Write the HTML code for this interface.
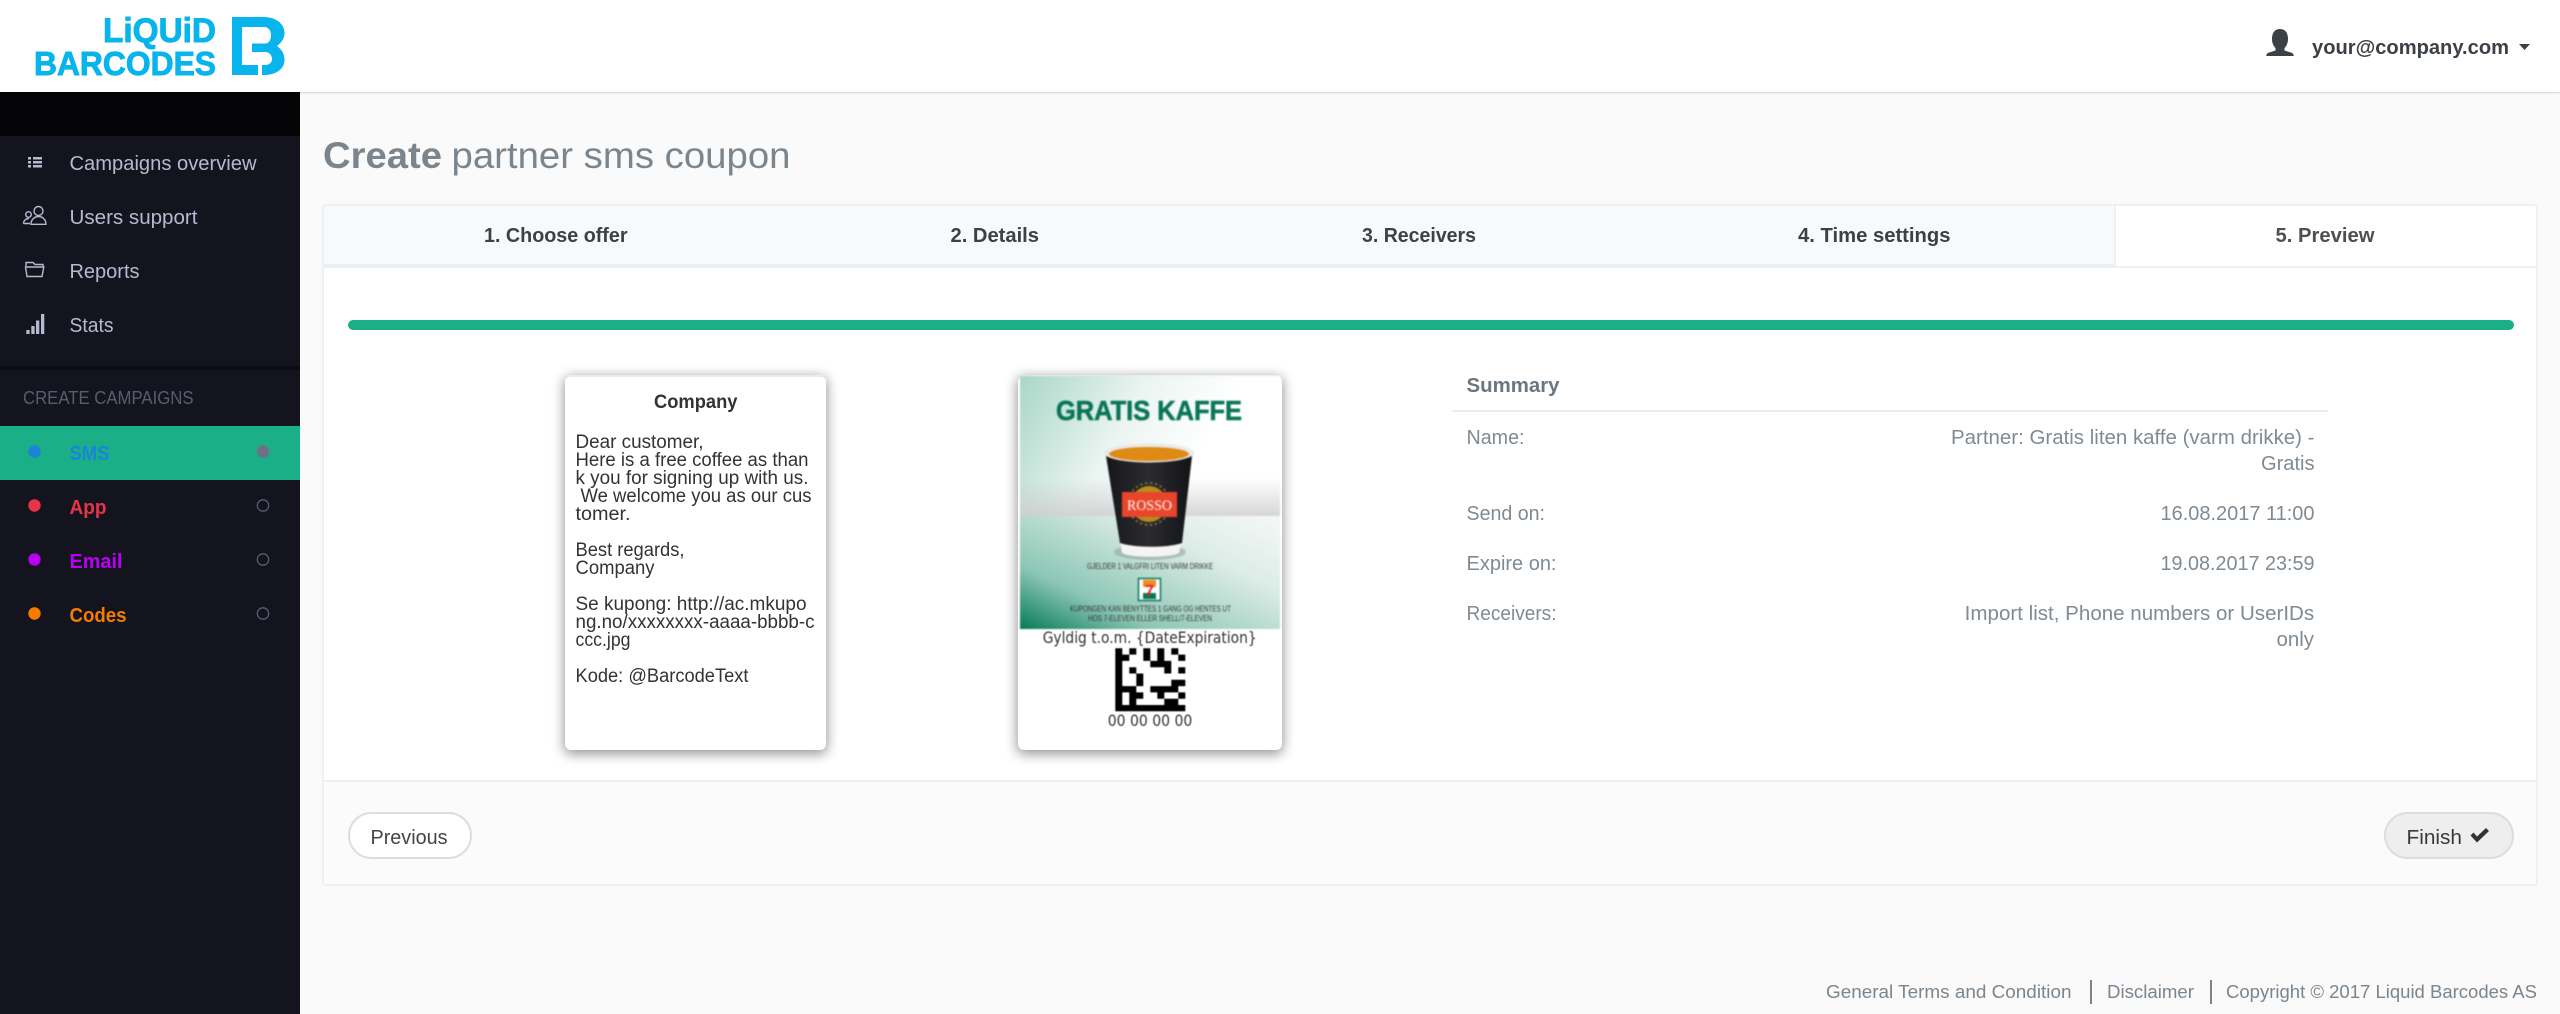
<!DOCTYPE html>
<html lang="en"><head><meta charset="utf-8"><title>Create partner sms coupon</title>
<style>
html,body{margin:0;padding:0;background:#fafafa}
#p{position:relative;width:2560px;height:1014px;overflow:hidden;background:#fafafa}
#p>div{position:absolute;box-sizing:border-box}
#hd{left:0;top:0;width:2560px;height:92px;background:#fff;box-shadow:0 1px 2px rgba(0,0,0,.16)}
#sb{left:0;top:92px;width:300px;height:922px;background:#13141d}
.card{background:#fff;border-radius:6px;border-top:2px solid #e8ecef;box-shadow:0 3px 12px 1px rgba(0,0,0,.42)}
svg{position:absolute;left:0;top:0}
text{font-family:"Liberation Sans",Arial,sans-serif}
.dj{font-family:"DejaVu Sans",sans-serif}
.b{font-weight:700}
</style></head><body><div id="p">
<div id="hd"></div>
<div id="sb"></div>
<div style="left:322px;top:204px;width:2216px;height:682px;background:#fff;border:2px solid #edf0f4;border-radius:3px"></div>
<div style="left:324px;top:206px;width:1792px;height:58px;background:#f8f9fb"></div>
<div style="left:324px;top:264px;width:1792px;height:4px;background:#ebeef2"></div>
<div style="left:2116px;top:266px;width:420px;height:2px;background:#edf0f4"></div>
<div style="left:2114px;top:206px;width:2px;height:60px;background:#edf0f4"></div>
<div style="left:324px;top:782px;width:2212px;height:102px;background:#fbfbfb"></div>
<div style="left:324px;top:780px;width:2212px;height:2px;background:#edf0f4"></div>
<div style="left:348px;top:320px;width:2166px;height:10px;background:#1aaf87;border-radius:5px"></div>
<div class="card" style="left:565px;top:375px;width:261px;height:375px"></div>
<div class="card" style="left:1018px;top:375px;width:264px;height:375px"></div>
<div style="left:348px;top:812px;width:124px;height:47px;background:#fff;border:2px solid #ddd;border-radius:24px"></div>
<div style="left:2384px;top:812px;width:130px;height:47px;background:#eee;border:2px solid #ddd;border-radius:24px"></div>
<svg width="2560" height="1014" viewBox="0 0 2560 1014" xmlns="http://www.w3.org/2000/svg">
<defs>
<linearGradient id="w" x1="0" y1="0" x2="1" y2="0.3"><stop offset="0" stop-color="#a9d6c8"/><stop offset=".45" stop-color="#eaf4f1"/><stop offset=".8" stop-color="#fff"/></linearGradient>
<linearGradient id="hz" x1="0" y1="0" x2="0" y2="1"><stop offset="0" stop-color="#c8c8c8" stop-opacity="0"/><stop offset="1" stop-color="#c8c8c8" stop-opacity=".75"/></linearGradient>
<linearGradient id="f" x1="0" y1="1" x2="1" y2="0.1"><stop offset="0" stop-color="#067a58"/><stop offset=".28" stop-color="#8cc6b4"/><stop offset=".72" stop-color="#dcece7"/><stop offset="1" stop-color="#f2f6f5"/></linearGradient>
<linearGradient id="c" x1="0" y1="0" x2="1" y2="0"><stop offset="0" stop-color="#15161a"/><stop offset=".5" stop-color="#2c2c30"/><stop offset="1" stop-color="#121316"/></linearGradient>
</defs>
<!-- logo -->
<g fill="#08b4ec" stroke="#08b4ec">
<text class="b" x="103" y="42" font-size="34" stroke-width=".9" textLength="113" lengthAdjust="spacingAndGlyphs">LiQUiD</text>
<text class="b" x="34" y="75" font-size="33" stroke-width=".9" textLength="182" lengthAdjust="spacingAndGlyphs">BARCODES</text>
<path stroke="none" d="M232 17H264C276 17 284.500 24 284.500 33C284.500 39 281 43 277 46C281 49 284.500 53 284.500 60C284.500 69 276 75 264 75H262V65H265C269 65 272 63 272 59C272 55 269 52 265 52H252V43.500H265C269 43.500 271 40 271 35C271 30 268 27 264 27H242V65H258V75H232Z"/>
</g>
<!-- user -->
<path fill="#3b4147" d="M2280 29C2274 29 2272 34 2272 39C2272 43 2273.500 46 2275.500 48V50.500L2267.500 53L2266 56H2294L2292.500 53L2284.500 50.500V48C2286.500 46 2288 43 2288 39C2288 34 2286 29 2280 29Z"/>
<text class="b" x="2312" y="54" font-size="20" fill="#3b4147" textLength="197" lengthAdjust="spacingAndGlyphs">your@company.com</text>
<path fill="#3b4147" d="M2519 44H2530L2524.500 50Z"/>
<!-- sidebar -->
<rect x="0" y="92" width="300" height="44" fill="#050508"/>
<rect x="0" y="366" width="300" height="4" fill="#0c0d13"/>
<rect x="0" y="426" width="300" height="54" fill="#1aaf87"/>
<g fill="#b4bbd0" font-size="20">
<text x="69.500" y="170" textLength="187" lengthAdjust="spacingAndGlyphs">Campaigns overview</text>
<text x="69.500" y="224" textLength="128" lengthAdjust="spacingAndGlyphs">Users support</text>
<text x="69.500" y="278" textLength="70" lengthAdjust="spacingAndGlyphs">Reports</text>
<text x="69.500" y="332" textLength="44" lengthAdjust="spacingAndGlyphs">Stats</text>
<path d="M28 157h3v2.500h-3zM33 157h9v2.500h-9zM28 161h3v2.500h-3zM33 161h9v2.500h-9zM28 165h3v2.500h-3zM33 165h9v2.500h-9z"/>
<path d="M26.300 330h3.300v4h-3.300zM31.300 326h3.300v8h-3.300zM36 320.500h3.300v13.500h-3.300zM41 314h3.300v20h-3.300z"/>
</g>
<g fill="none" stroke="#b4bbd0" stroke-width="1.400">
<circle cx="38.500" cy="211" r="4.500"/>
<path d="M31 224.300C31 219.500 34.500 216.500 38.500 216.500C42.500 216.500 46 219.500 46 224.300Z"/>
<circle cx="28.500" cy="214.500" r="2.800"/>
<path d="M23.500 223.500C23.500 220.500 26 218.500 29 218.500M23.500 223.500H30"/>
<path d="M26 266V262.500H33L35 264.500H43V267M25.500 267H43.800L42 276.500H27Z"/>
</g>
<text x="23" y="404" font-size="18" fill="#5a5c6e" textLength="170.500" lengthAdjust="spacingAndGlyphs">CREATE CAMPAIGNS</text>
<g class="b" font-size="20" font-weight="700">
<text x="69.500" y="460" fill="#1b84d8" textLength="40" lengthAdjust="spacingAndGlyphs">SMS</text>
<text x="69.500" y="514" fill="#e8344a" textLength="37" lengthAdjust="spacingAndGlyphs">App</text>
<text x="69.500" y="568" fill="#b800f5" textLength="53" lengthAdjust="spacingAndGlyphs">Email</text>
<text x="69.500" y="622" fill="#f57c00" textLength="57" lengthAdjust="spacingAndGlyphs">Codes</text>
</g>
<circle cx="34.500" cy="451.500" r="6.200" fill="#1b84d8"/>
<circle cx="34.500" cy="505.500" r="6.200" fill="#e8344a"/>
<circle cx="34.500" cy="559.500" r="6.200" fill="#b800f5"/>
<circle cx="34.500" cy="613.500" r="6.200" fill="#f57c00"/>
<circle cx="263" cy="451.500" r="6.200" fill="#6f7086"/>
<g fill="none" stroke="#5a5c6e" stroke-width="1.300"><circle cx="263" cy="505.500" r="5.700"/><circle cx="263" cy="559.500" r="5.700"/><circle cx="263" cy="613.500" r="5.700"/></g>
<!-- title -->
<text class="b" x="323" y="168" font-size="37" fill="#7a858e" textLength="119" lengthAdjust="spacingAndGlyphs">Create</text>
<text x="451.500" y="168" font-size="37" fill="#7a858e" textLength="339" lengthAdjust="spacingAndGlyphs">partner sms coupon</text>
<!-- tabs -->
<g class="b" font-size="20" font-weight="700" fill="#3b4147">
<text x="484" y="242" textLength="143.500" lengthAdjust="spacingAndGlyphs">1. Choose offer</text>
<text x="950.500" y="242" textLength="88.500" lengthAdjust="spacingAndGlyphs">2. Details</text>
<text x="1362" y="242" textLength="114" lengthAdjust="spacingAndGlyphs">3. Receivers</text>
<text x="1798" y="242" textLength="152.500" lengthAdjust="spacingAndGlyphs">4. Time settings</text>
<text x="2275.500" y="242" fill="#4f4f4f" textLength="99" lengthAdjust="spacingAndGlyphs">5. Preview</text>
</g>
<!-- sms card -->
<g fill="#333" font-size="19">
<text class="b" font-weight="700" x="654" y="408" textLength="83.500" lengthAdjust="spacingAndGlyphs">Company</text>
<text x="575.500" y="448" textLength="128" lengthAdjust="spacingAndGlyphs">Dear customer,</text>
<text x="575.500" y="466" textLength="233" lengthAdjust="spacingAndGlyphs">Here is a free coffee as than</text>
<text x="575.500" y="484" textLength="233" lengthAdjust="spacingAndGlyphs">k you for signing up with us.</text>
<text x="580.500" y="502" textLength="231" lengthAdjust="spacingAndGlyphs">We welcome you as our cus</text>
<text x="575.500" y="520" textLength="55" lengthAdjust="spacingAndGlyphs">tomer.</text>
<text x="575.500" y="556" textLength="109" lengthAdjust="spacingAndGlyphs">Best regards,</text>
<text x="575.500" y="574" textLength="79" lengthAdjust="spacingAndGlyphs">Company</text>
<text x="575.500" y="610" textLength="231" lengthAdjust="spacingAndGlyphs">Se kupong: http://ac.mkupo</text>
<text x="575.500" y="628" textLength="239" lengthAdjust="spacingAndGlyphs">ng.no/xxxxxxxx-aaaa-bbbb-c</text>
<text x="575.500" y="646" textLength="55" lengthAdjust="spacingAndGlyphs">ccc.jpg</text>
<text x="575.500" y="682" textLength="173" lengthAdjust="spacingAndGlyphs">Kode: @BarcodeText</text>
</g>
<!-- coupon image -->
<g style="filter:blur(.8px)">
<rect x="1020" y="376" width="260" height="140" fill="url(#w)"/>
<rect x="1020" y="478" width="260" height="38" fill="url(#hz)"/>
<rect x="1020" y="516" width="260" height="113" fill="url(#f)"/>
<text class="b" font-weight="700" x="1056" y="420" font-size="28" fill="#0a7556" stroke="#0a7556" stroke-width=".6" textLength="186" lengthAdjust="spacingAndGlyphs">GRATIS KAFFE</text>
<ellipse cx="1150" cy="552" rx="36" ry="8" fill="#8a9a94" opacity=".5"/>
<path d="M1120 540L1122 553C1130 558 1170 558 1179 553L1182 540Z" fill="#f4f4f2"/>
<path d="M1106 456L1120 543C1135 548 1168 548 1182 543L1192 456Z" fill="url(#c)"/>
<ellipse cx="1149" cy="453" rx="45" ry="9.500" fill="#e9e9e6"/>
<ellipse cx="1149" cy="454" rx="40" ry="7" fill="#e08a16"/>
<circle cx="1149" cy="504" r="18" fill="#b78d1a"/>
<circle cx="1149" cy="504" r="21" fill="none" stroke="#9a8a40" stroke-width="1.500" stroke-dasharray="2 3"/>
<rect x="1122" y="492" width="55" height="25" fill="#e8452a"/>
<text x="1127" y="510" font-size="15" fill="#fff" font-weight="400" style="font-family:'Liberation Serif',serif" textLength="45" lengthAdjust="spacingAndGlyphs">ROSSO</text>
<text x="1087" y="569" font-size="8.500" fill="#333" textLength="126" lengthAdjust="spacingAndGlyphs">GJELDER 1 VALGFRI LITEN VARM DRIKKE</text>
<rect x="1138.500" y="578.500" width="22" height="22" fill="#fff" stroke="#0a7556" stroke-width="1.500"/>
<rect x="1143" y="580" width="13" height="7" fill="#f28c1e"/>
<rect x="1143" y="593" width="13" height="6" fill="#0a7556"/>
<text class="b" font-weight="700" x="1145" y="596" font-size="16" fill="#d8232a" textLength="9" lengthAdjust="spacingAndGlyphs">7</text>
<text x="1070" y="611.500" font-size="8.500" fill="#333" textLength="161" lengthAdjust="spacingAndGlyphs">KUPONGEN KAN BENYTTES 1 GANG OG HENTES UT</text>
<text x="1088" y="621" font-size="8.500" fill="#333" textLength="124" lengthAdjust="spacingAndGlyphs">HOS 7-ELEVEN ELLER SHELL/7-ELEVEN</text>
</g>
<g style="filter:blur(.4px)">
<text class="dj" x="1042.700" y="643" font-size="16" fill="#333" textLength="214" lengthAdjust="spacingAndGlyphs">Gyldig t.o.m. {DateExpiration}</text>
<path fill="#000" d="M1115.300 648.300h7v63h-7zM1115.300 705h70v6.300h-70zM1129.300 648.300h7v6.300h-7zM1143.300 648.300h7v6.300h-7zM1157.300 648.300h7v6.300h-7zM1171.300 648.300h7v6.300h-7zM1122.300 654.600h7v6.300h-7zM1143.300 654.600h7v6.300h-7zM1157.300 654.600h7v6.300h-7zM1178.300 654.600h7v6.300h-7zM1150.300 660.900h21v6.300h-21zM1129.300 667.200h7v6.300h-7zM1164.300 667.200h7v6.300h-7zM1178.300 667.200h7v6.300h-7zM1136.300 673.500h7v12.600h-7zM1171.300 679.800h14v6.300h-14zM1122.300 686.100h14v6.300h-14zM1150.300 686.100h28v6.300h-28zM1129.300 692.400h14v6.300h-14zM1157.300 692.400h7v6.300h-7zM1178.300 692.400h7v6.300h-7zM1129.300 698.700h7v6.300h-7zM1164.300 698.700h14v6.300h-14z"/>
<text class="dj" x="1107.700" y="726" font-size="16" fill="#333" textLength="84.600" lengthAdjust="spacingAndGlyphs">00 00 00 00</text>
</g>
<!-- summary -->
<text class="b" font-weight="700" x="1466.500" y="392" font-size="20" fill="#6b7680" textLength="93" lengthAdjust="spacingAndGlyphs">Summary</text>
<rect x="1452.500" y="410" width="875" height="2" fill="#e9ecef"/>
<g font-size="20" fill="#7f8a93">
<text x="1466.500" y="444" textLength="58" lengthAdjust="spacingAndGlyphs">Name:</text>
<text x="1951" y="444" textLength="363.500" lengthAdjust="spacingAndGlyphs">Partner: Gratis liten kaffe (varm drikke) -</text>
<text x="2261" y="470" textLength="53.500" lengthAdjust="spacingAndGlyphs">Gratis</text>
<text x="1466.500" y="520" textLength="78.500" lengthAdjust="spacingAndGlyphs">Send on:</text>
<text x="2160.500" y="520" textLength="154" lengthAdjust="spacingAndGlyphs">16.08.2017 11:00</text>
<text x="1466.500" y="570" textLength="90" lengthAdjust="spacingAndGlyphs">Expire on:</text>
<text x="2160.500" y="570" textLength="154" lengthAdjust="spacingAndGlyphs">19.08.2017 23:59</text>
<text x="1466.500" y="620" textLength="90" lengthAdjust="spacingAndGlyphs">Receivers:</text>
<text x="1964.700" y="620" textLength="349.500" lengthAdjust="spacingAndGlyphs">Import list, Phone numbers or UserIDs</text>
<text x="2276.500" y="646" textLength="37.500" lengthAdjust="spacingAndGlyphs">only</text>
</g>
<!-- buttons -->
<text x="370.500" y="844" font-size="20" fill="#444" textLength="77" lengthAdjust="spacingAndGlyphs">Previous</text>
<text x="2406.500" y="844" font-size="20" fill="#3a3a3a" textLength="55.500" lengthAdjust="spacingAndGlyphs">Finish</text>
<path fill="#333" d="M2470.500 835.500L2473.500 832.500L2477 836.500L2486 828L2489 831L2477 842.500Z"/>
<!-- footer -->
<g font-size="18" fill="#7a858e">
<text x="1826" y="998" textLength="245.500" lengthAdjust="spacingAndGlyphs">General Terms and Condition</text>
<text x="2107" y="998" textLength="87" lengthAdjust="spacingAndGlyphs">Disclaimer</text>
<text x="2226" y="998" textLength="311" lengthAdjust="spacingAndGlyphs">Copyright © 2017 Liquid Barcodes AS</text>
<rect x="2090" y="980" width="2" height="24"/>
<rect x="2210" y="980" width="2" height="24"/>
</g>
</svg>
</div></body></html>
